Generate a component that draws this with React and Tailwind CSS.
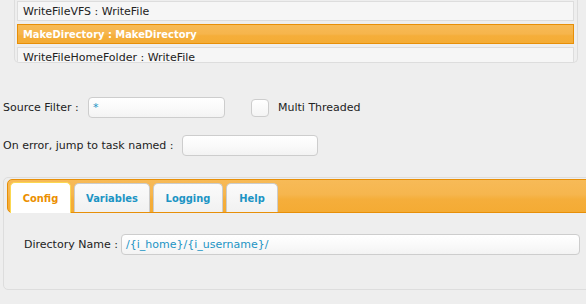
import React from 'react';

const tasks = [
    {name: 'WriteFileVFS', type: 'WriteFile'},
    {name: 'MakeDirectory', type: 'MakeDirectory', selected: true},
    {name: 'WriteFileHomeFolder', type: 'WriteFile'},
];

const tabs = [
    {label: 'Config', w: 'w-[61px]', active: true},
    {label: 'Variables', w: 'w-[76px]'},
    {label: 'Logging', w: 'w-[70px]'},
    {label: 'Help', w: 'w-[52px]'},
];

const inputClass = "shrink-0 h-[21px] border border-[#cdcdcd] rounded-[4px] bg-[linear-gradient(to_bottom,#ffffff,#fafafa_50%,#f3f3f3)] px-[4px] flex items-center text-[#1c94c4]";

function TaskList() {
    return (
        <div className="ml-[14px] w-[564px] h-[63px] overflow-hidden border-x border-b border-[#dddddd] rounded-b-[5px] pl-[2px] pt-[1px] flex flex-col gap-[3px]">
            {tasks.map((t) => (
                <div
                    key={t.name}
                    className={
                        t.selected
                            ? "shrink-0 w-[557px] h-[20px] flex items-center pl-[5px] border border-[#e78f08] bg-[linear-gradient(to_bottom,#f7ba56,#f6b54c_50%,#f5ae3a_60%,#f4ac35)] text-white font-bold font-['DejaVu_Sans_Condensed','DejaVu_Sans',sans-serif]"
                            : "shrink-0 w-[557px] h-[20px] flex items-center pl-[5px] border border-[#dddddd] bg-[#f6f6f6] text-[#222]"
                    }
                >
                    {t.name} : {t.type}
                </div>
            ))}
        </div>
    );
}

function Tabs() {
    return (
        <div className="ml-[3px] mt-[21px] w-[640px] h-[113px] border border-[#dddddd] rounded-[5px] bg-[#eeeeee] pt-[1px] px-[3px]">
            <div className="h-[34px] border border-[#e78f08] rounded-[5px] bg-[linear-gradient(to_bottom,#f7ba57,#f6b64e_45%,#f5ae3b_60%,#f4ab34)] pt-[2px] px-[2px] flex items-end gap-[3px] font-bold font-['DejaVu_Sans_Condensed','DejaVu_Sans',sans-serif]">
                {tabs.map((t) => (
                    <div
                        key={t.label}
                        className={
                            t.active
                                ? `${t.w} h-[31px] -mb-[1px] relative flex items-center justify-center border-x border-t border-[#fbd850] rounded-t-[5px] bg-white text-[#eb8f00]`
                                : `${t.w} h-[29px] flex items-center justify-center border-x border-t border-[#cccccc] rounded-t-[5px] bg-[linear-gradient(to_bottom,#fbfbfb,#f6f6f6_50%,#f1f1f1)] text-[#1c94c4]`
                        }
                    >
                        {t.label}
                    </div>
                ))}
            </div>

            <div className="mt-[21px] pl-[17px] flex items-center">
                <span className="shrink-0 w-[97px] whitespace-nowrap">Directory Name :</span>
                <div className={`${inputClass} w-[459px]`}>/{'{i_home}'}/{'{i_username}'}/</div>
            </div>
        </div>
    );
}

export default function App() {
    return (
        <div className="w-[586px] h-[304px] overflow-hidden bg-[#eeeeee] text-[11px] leading-none text-[#222222] font-['DejaVu_Sans',sans-serif]">
            <TaskList/>

            <div className="mt-[34px] flex items-center h-[21px]">
                <span className="shrink-0 pl-[3px] w-[88px] whitespace-nowrap">Source Filter :</span>
                <div className={`${inputClass} w-[137px]`}>*</div>
                <div className="shrink-0 ml-[26px] w-[18px] h-[18px] border border-[#cdcdcd] rounded-[4px] bg-[linear-gradient(to_bottom,#ffffff,#f4f4f4)]"></div>
                <span className="ml-[9px]">Multi Threaded</span>
            </div>

            <div className="mt-[17px] flex items-center h-[21px]">
                <span className="shrink-0 pl-[3px] w-[182px] whitespace-nowrap">On error, jump to task named :</span>
                <div className={`${inputClass} w-[136px]`}></div>
            </div>

            <Tabs/>
        </div>
    );
}
